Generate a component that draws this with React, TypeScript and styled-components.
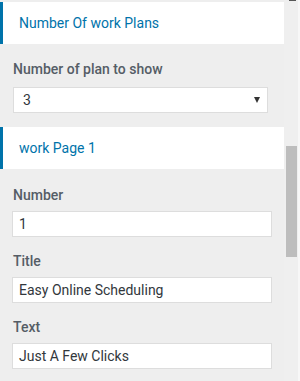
import React from "react";
import styled, { createGlobalStyle } from "styled-components";

const Global = createGlobalStyle`
  html, body { margin: 0; padding: 0; background: #eeeeee; }
  body { font-family: Roboto, "Noto Sans", Arial, sans-serif; }
  * { box-sizing: border-box; }
`;

const Frame = styled.div`
  display: flex;
  width: 300px;
  height: 381px;
  overflow: hidden;
  background: #eeeeee;
`;

const Main = styled.div`
  width: 284px;
  padding-top: 2px;
  display: flex;
  flex-direction: column;
`;

const Section = styled.section<{ $gap?: number }>`
  margin-top: ${(p) => p.$gap ?? 0}px;
`;

const Header = styled.div`
  height: 42px;
  background: #ffffff;
  border-left: 3px solid #0073aa;
  padding-left: 16px;
  display: flex;
  align-items: center;
  color: #0073aa;
  font-size: 14px;
  font-weight: 400;
`;

const Body = styled.div`
  padding: 0 12px;
  display: flex;
  flex-direction: column;
`;

const Field = styled.div<{ $top: number }>`
  margin-top: ${(p) => p.$top}px;
  display: flex;
  flex-direction: column;
`;

const Label = styled.label<{ $gap: number }>`
  display: block;
  font-size: 14px;
  line-height: 18px;
  font-weight: 500;
  color: #555d66;
  margin-bottom: ${(p) => p.$gap}px;
  padding-left: 1px;
`;

const Input = styled.div`
  width: 260px;
  height: 26px;
  background: #ffffff;
  border: 1px solid #dddddd;
  padding-left: 6px;
  display: flex;
  align-items: center;
  font-size: 14px;
  color: #32373c;
`;

const Select = styled.div`
  margin-left: 1px;
  width: 255px;
  height: 26px;
  background: #ffffff;
  border: 1px solid #dddddd;
  padding: 0 7px 0 9px;
  display: flex;
  align-items: center;
  justify-content: space-between;
  font-size: 14px;
  color: #32373c;
`;

const Caret = styled.span`
  width: 0;
  height: 0;
  border-left: 3px solid transparent;
  border-right: 3px solid transparent;
  border-top: 6px solid #333333;
`;

const Track = styled.div`
  width: 16px;
  background: #efefef;
  border-right: 2px solid #f7f7f7;
  display: flex;
  flex-direction: column;
  align-items: center;
  padding-left: 1px;
`;

const ArrowStub = styled.div`
  width: 7px;
  height: 1px;
  background: #555555;
  margin-left: 2px;
`;

const Thumb = styled.div`
  width: 11px;
  height: 111px;
  margin-top: 145px;
  background: #bdbdbd;
`;

export default function App() {
  return (
    <>
      <Global />
      <Frame>
        <Main>
          <Section>
            <Header>Number Of work Plans</Header>
            <Body>
              <Field $top={16}>
                <Label $gap={9}>Number of plan to show</Label>
                <Select>
                  <span>3</span>
                  <Caret />
                </Select>
              </Field>
            </Body>
          </Section>
          <Section $gap={14}>
            <Header>work Page 1</Header>
            <Body>
              <Field $top={17}>
                <Label $gap={7}>Number</Label>
                <Input>1</Input>
              </Field>
              <Field $top={15}>
                <Label $gap={7}>Title</Label>
                <Input>Easy Online Scheduling</Input>
              </Field>
              <Field $top={15}>
                <Label $gap={7}>Text</Label>
                <Input>Just A Few Clicks</Input>
              </Field>
            </Body>
          </Section>
        </Main>
        <Track>
          <ArrowStub />
          <Thumb />
        </Track>
      </Frame>
    </>
  );
}
